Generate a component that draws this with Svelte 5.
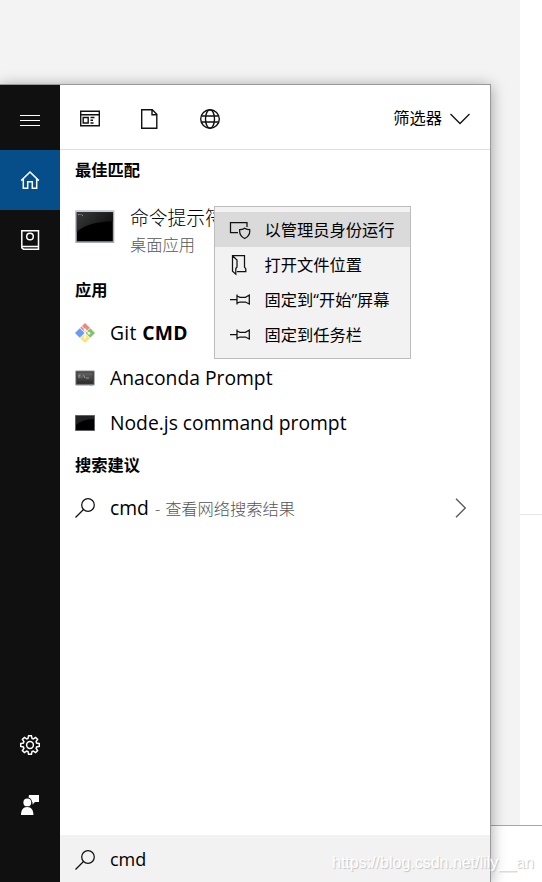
<script lang="ts">
	type MenuItem = { icon: 'admin' | 'folder' | 'pin'; label: string };

	const menu: MenuItem[] = [
		{ icon: 'admin', label: '以管理员身份运行' },
		{ icon: 'folder', label: '打开文件位置' },
		{ icon: 'pin', label: '固定到“开始”屏幕' },
		{ icon: 'pin', label: '固定到任务栏' }
	];

	let query = $state('cmd');
</script>

{#snippet searchIcon()}
	<svg class="icon" width="20" height="20" viewBox="0 0 20 20">
		<circle cx="13" cy="7" r="6.3" />
		<path d="M8.5 11.5 0.5 19.5" />
	</svg>
{/snippet}

<div class="screen">
	<div class="backdrop">
		<div class="editor">
			<div class="gutter"></div>
			<div class="side"><div class="divider"></div></div>
		</div>
		<div class="footer"></div>
	</div>

	<div class="panel">
		<nav class="rail">
			<button type="button" aria-label="menu">
				<svg class="icon light crisp" width="20" height="20" viewBox="0 0 20 20"><path d="M0 5.5h20M0 10.5h20M0 15.5h20" /></svg>
			</button>
			<button type="button" class="active" aria-label="home">
				<svg class="icon light home" width="20" height="20" viewBox="0 0 20 20"><path d="M1.2 10.6 10 2l8.8 8.6M3.3 9v9.3h4.4v-6.5h4.6v6.5h4.4V9" /></svg>
			</button>
			<button type="button" aria-label="notebook">
				<svg class="icon light book" width="20" height="20" viewBox="0 0 20 20"><path d="M3.5.8h15v18.4h-15L1.8 17.8V.8h2M2 16.5h16.5" /><circle cx="10" cy="6.5" r="3.3" /></svg>
			</button>
			<div class="spacer"></div>
			<button type="button" aria-label="settings">
				<svg class="icon light gear" width="20" height="20" viewBox="-10 -10 20 20">
					<path d="M-1.4-9.3H1.4L2-6.6 3.3-6.1 5.6-7.6 7.6-5.6 6.1-3.3 6.6-2 9.3-1.4V1.4L6.6 2 6.1 3.3 7.6 5.6 5.6 7.6 3.3 6.1 2 6.6 1.4 9.3H-1.4L-2 6.6-3.3 6.1-5.6 7.6-7.6 5.6-6.1 3.3-6.6 2-9.3 1.4V-1.4L-6.6-2-6.1-3.3-7.6-5.6-5.6-7.6-3.3-6.1-2-6.6Z" />
					<circle r="3.4" />
				</svg>
			</button>
			<button type="button" aria-label="feedback">
				<svg width="20" height="20" viewBox="0 0 20 20" fill="#fff">
					<path d="M9 0h10v7h-4l-2.5 2.6V7H12Q11.500 3 8.500 2.500Z" />
					<circle cx="7.300" cy="7.400" r="3.900" />
					<path d="M1 20c0-5 2-8 6.200-8s6.200 3 6.200 8Z" />
				</svg>
			</button>
		</nav>

		<div class="content">
			<header class="filters">
				<svg class="icon tool" width="20" height="20" viewBox="0 0 20 20">
					<path d="M.7 2.200h18.600v14.600H.7ZM.7 5.700h18.600M3.200 8.500h5v5.500h-5ZM10.500 8.500h4M10.500 11.200h2.500M10.500 14h3" />
				</svg>
				<svg class="icon tool" width="20" height="20" viewBox="0 0 20 20">
					<path d="M1.700.7h10.600l4.500 4.500v14.100H1.700ZM12 .7v5h5" />
				</svg>
				<svg class="icon tool" width="20" height="20" viewBox="0 0 20 20">
					<circle cx="10" cy="10" r="9.300" />
					<ellipse cx="10" cy="10" rx="4.500" ry="9.300" />
					<path d="M1.500 7h17M1.500 13h17" />
				</svg>
				<span class="filter-label">筛选器</span>
				<svg class="icon chevron-down" width="20" height="12" viewBox="0 0 20 12"><path d="m.5 1 9.500 9.500L19.500 1" /></svg>
			</header>

			<h2>最佳匹配</h2>
			<div class="best">
				<svg width="40" height="34" viewBox="0 0 40 34">
					<defs>
						<linearGradient id="gloss" x1="0" y1="0" x2="1" y2=".5">
							<stop offset="0" stop-color="#3a3a3a" />
							<stop offset="1" stop-color="#111" />
						</linearGradient>
					</defs>
					<rect x=".3" y=".5" width="39" height="32.500" fill="#a6abb3" />
					<rect x=".3" y=".5" width="39" height="1.500" fill="#c6ccd7" />
					<rect x="1.800" y="2.300" width="36" height="29" fill="#000" />
					<path d="M1.800 2.300h36v9Q12 12 1.800 22Z" fill="url(#gloss)" />
					<path d="M3 4.500h1.500M5.500 4.500h1M7 5.500h1" stroke="#aaa" stroke-width=".8" />
				</svg>
				<div class="best-text">
					<div class="best-title">命令提示符</div>
					<div class="best-kind">桌面应用</div>
				</div>
			</div>

			<h2>应用</h2>
			<div class="row">
				<svg width="20" height="20" viewBox="0 0 20 20">
					<path d="m10 0 4.800 4.800L10 9.600 5.200 4.800Z" fill="#f38482" />
					<path d="m15.200 5.200L20 10l-4.800 4.800L10.400 10Z" fill="#80c46b" />
					<path d="m4.800 5.200L9.600 10l-4.800 4.800L0 10Z" fill="#659df6" />
					<path d="m10 10.400 4.800 4.800L10 20l-4.800-4.800Z" fill="#ffe07a" />
					<path d="m6.500 3 3.500 3.500v8.500M10 6.500l4 4" fill="none" stroke="#fff" stroke-width="1" />
					<circle cx="10" cy="6.800" r="1.300" fill="#fff" />
					<circle cx="14" cy="10.300" r="1.300" fill="#fff" />
					<circle cx="10" cy="14.500" r="1.300" fill="#fff" />
				</svg>
				<span class="name git">Git <b>CMD</b></span>
			</div>
			<div class="row">
				<svg width="20" height="16" viewBox="0 0 20 16">
					<defs>
						<linearGradient id="shell" x1="0" y1="0" x2="0" y2="1">
							<stop offset="0" stop-color="#666" />
							<stop offset="1" stop-color="#292929" />
						</linearGradient>
					</defs>
					<rect x=".3" y=".5" width="19.400" height="15" rx="1" fill="#8d8f91" />
					<rect x="1.800" y="2" width="16.400" height="11.800" fill="url(#shell)" stroke="#333" />
					<path d="M5.500 5.200q-2-.7-2 1t2 1M7 6v.5M7 7.500v.3M8.500 5l1.500 3M11 8h3" fill="none" stroke="#bbb" stroke-width=".7" />
					<path d="M15 15h2" stroke="#3ba4d0" />
				</svg>
				<span class="name">Anaconda Prompt</span>
			</div>
			<div class="row">
				<svg width="20" height="16" viewBox="0 0 20 16">
					<rect width="20" height="16" fill="#777a80" />
					<rect x=".8" y=".8" width="18.400" height="14.400" fill="#000" />
					<path d="M1 1h18v3Q7 4 1 10Z" fill="#222" />
				</svg>
				<span class="name">Node.js command prompt</span>
			</div>

			<h2>搜索建议</h2>
			<div class="row">
				{@render searchIcon()}
				<span class="name">{query}</span>
				<span class="hint"><span class="dash">-</span>查看网络搜索结果</span>
				<svg class="icon chevron-right" width="12" height="20" viewBox="0 0 12 20"><path d="m1 .7 9.300 9.300L1 19.300" /></svg>
			</div>

			<div class="search-box">
				{@render searchIcon()}
				<span class="name">{query}</span>
			</div>
		</div>
	</div>

	<div class="context-menu">
		{#each menu as item, i}
			<div class="menu-item" class:hover={i === 0}>
				<svg class="icon" width="22" height="22" viewBox="0 0 22 22">
					{#if item.icon === 'admin'}
						<path d="M9 13.500H1.500V3.500H18V8" />
						<path d="M15.700 9.200q2.300 1.500 5 1.500.7 6-5 8.800-5.700-2.800-5-8.800 2.700 0 5-1.500Z" />
					{:else if item.icon === 'folder'}
						<path d="M8 17.500h8.800V15l-1.300-2V1.700H3.500v15.600l3.300 2.900v-5.700L8 13V6L3.500 1.700" />
					{:else}
						<path d="M1 10.500h7M8 5.500v10M8 7l3 1.300h5.500L20.300 6v9L16.500 13H11l-3 1.200" />
					{/if}
				</svg>
				<span class="menu-label">{item.label}</span>
			</div>
		{/each}
	</div>

	<div class="watermark">https://blog.csdn.net/lily__an</div>
</div>

<style>
	:global(body) {
		background: #fff;
	}

	.screen {
		position: relative;
		width: 542px;
		height: 882px;
		overflow: hidden;
		font-family: 'Open Sans', 'Noto Sans CJK SC', sans-serif;
		color: #000;
	}

	.backdrop {
		height: 100%;
		display: flex;
		flex-direction: column;
	}

	.editor {
		height: 825px;
		display: flex;
	}

	.gutter {
		width: 520px;
		background: #f3f3f3;
	}

	.side {
		flex: 1;
	}

	.divider {
		height: 514px;
		border-bottom: 1px solid #e5e5e5;
	}

	.footer {
		flex: 1;
		border-top: 1px solid #a6a6a6;
	}

	.panel {
		position: absolute;
		left: 0;
		top: 84px;
		width: 491px;
		height: 798px;
		box-sizing: border-box;
		display: flex;
		border: solid #999;
		border-width: 1px 1px 0 0;
		background: #fff;
		box-shadow: 0 2px 14px rgba(0, 0, 0, 0.36);
	}

	.rail {
		width: 60px;
		display: flex;
		flex-direction: column;
		background: #101010;
		padding: 5px 0 47px;
		box-sizing: border-box;
	}

	.rail button {
		height: 60px;
		border: 0;
		padding: 0;
		background: none;
		display: grid;
		place-items: center;
	}

	.rail .active {
		background: #064e8a;
	}

	.spacer {
		flex: 1;
	}

	.icon {
		fill: none;
		stroke: #111;
		stroke-width: 1.25;
		flex: none;
	}

	.tool {
		stroke-width: 1.4;
	}

	.light {
		stroke: #fff;
	}

	.crisp {
		stroke-width: 1;
	}

	.home,
	.book,
	.gear {
		stroke-width: 1.5;
	}

	.content {
		flex: 1;
		display: flex;
		flex-direction: column;
	}

	.filters {
		height: 65px;
		box-sizing: border-box;
		border-bottom: 1px solid #e0e0e0;
		display: flex;
		align-items: center;
		gap: 40px;
		padding: 3px 20px 0;
	}

	.filter-label {
		margin-left: auto;
		padding-bottom: 3px;
		font-size: 16.25px;
	}

	.chevron-down {
		margin-left: -32px;
	}

	.chevron-down,
	.chevron-right {
		stroke-width: 1.3;
	}

	h2 {
		margin: 0;
		height: 40px;
		padding-left: 15px;
		font-size: 16.25px;
		line-height: 40px;
		font-weight: 700;
	}

	.best {
		height: 80px;
		box-sizing: border-box;
		padding: 14px 15px 0;
		display: flex;
		gap: 15px;
	}

	.best svg {
		margin-top: 6px;
	}

	.best-title {
		font-size: 18.75px;
		line-height: 28px;
		font-weight: 300;
	}

	.best-kind {
		font-size: 16.25px;
		line-height: 26px;
		font-weight: 300;
		color: #555;
	}

	.row {
		height: 45px;
		padding: 0 23px 0 15px;
		display: flex;
		align-items: center;
	}

	.name {
		margin-left: 15px;
		font-size: 19.3px;
		line-height: 28px;
		white-space: pre;
	}

	.git {
		letter-spacing: 0.35px;
	}

	.hint {
		margin-left: 6px;
		font-size: 16.25px;
		font-weight: 300;
		color: #555;
	}

	.dash {
		margin-right: 5px;
	}

	.chevron-right {
		margin-left: auto;
		stroke: #555;
	}

	.search-box {
		margin-top: auto;
		height: 47px;
		box-sizing: border-box;
		padding: 2px 15px 0;
		display: flex;
		align-items: center;
		background: #f2f2f2;
	}

	.search-box .name {
		padding-bottom: 2px;
		font-size: 18px;
	}

	.context-menu {
		position: absolute;
		left: 214px;
		top: 206px;
		width: 197px;
		height: 153px;
		box-sizing: border-box;
		padding: 5px 0;
		border: 1px solid #bcbcbc;
		background: #f2f2f2;
	}

	.menu-item {
		height: 35px;
		padding-left: 14px;
		display: flex;
		align-items: center;
		gap: 13.5px;
		font-size: 16.25px;
		white-space: nowrap;
	}

	.menu-item.hover {
		background: #dadada;
	}

	.menu-label {
		padding-bottom: 2px;
	}

	.watermark {
		position: absolute;
		left: 332px;
		top: 853px;
		font: 16px/20px 'Liberation Sans', sans-serif;
		color: #fff;
		text-shadow: 1px 1px 1px #c2c2c2;
	}
</style>
